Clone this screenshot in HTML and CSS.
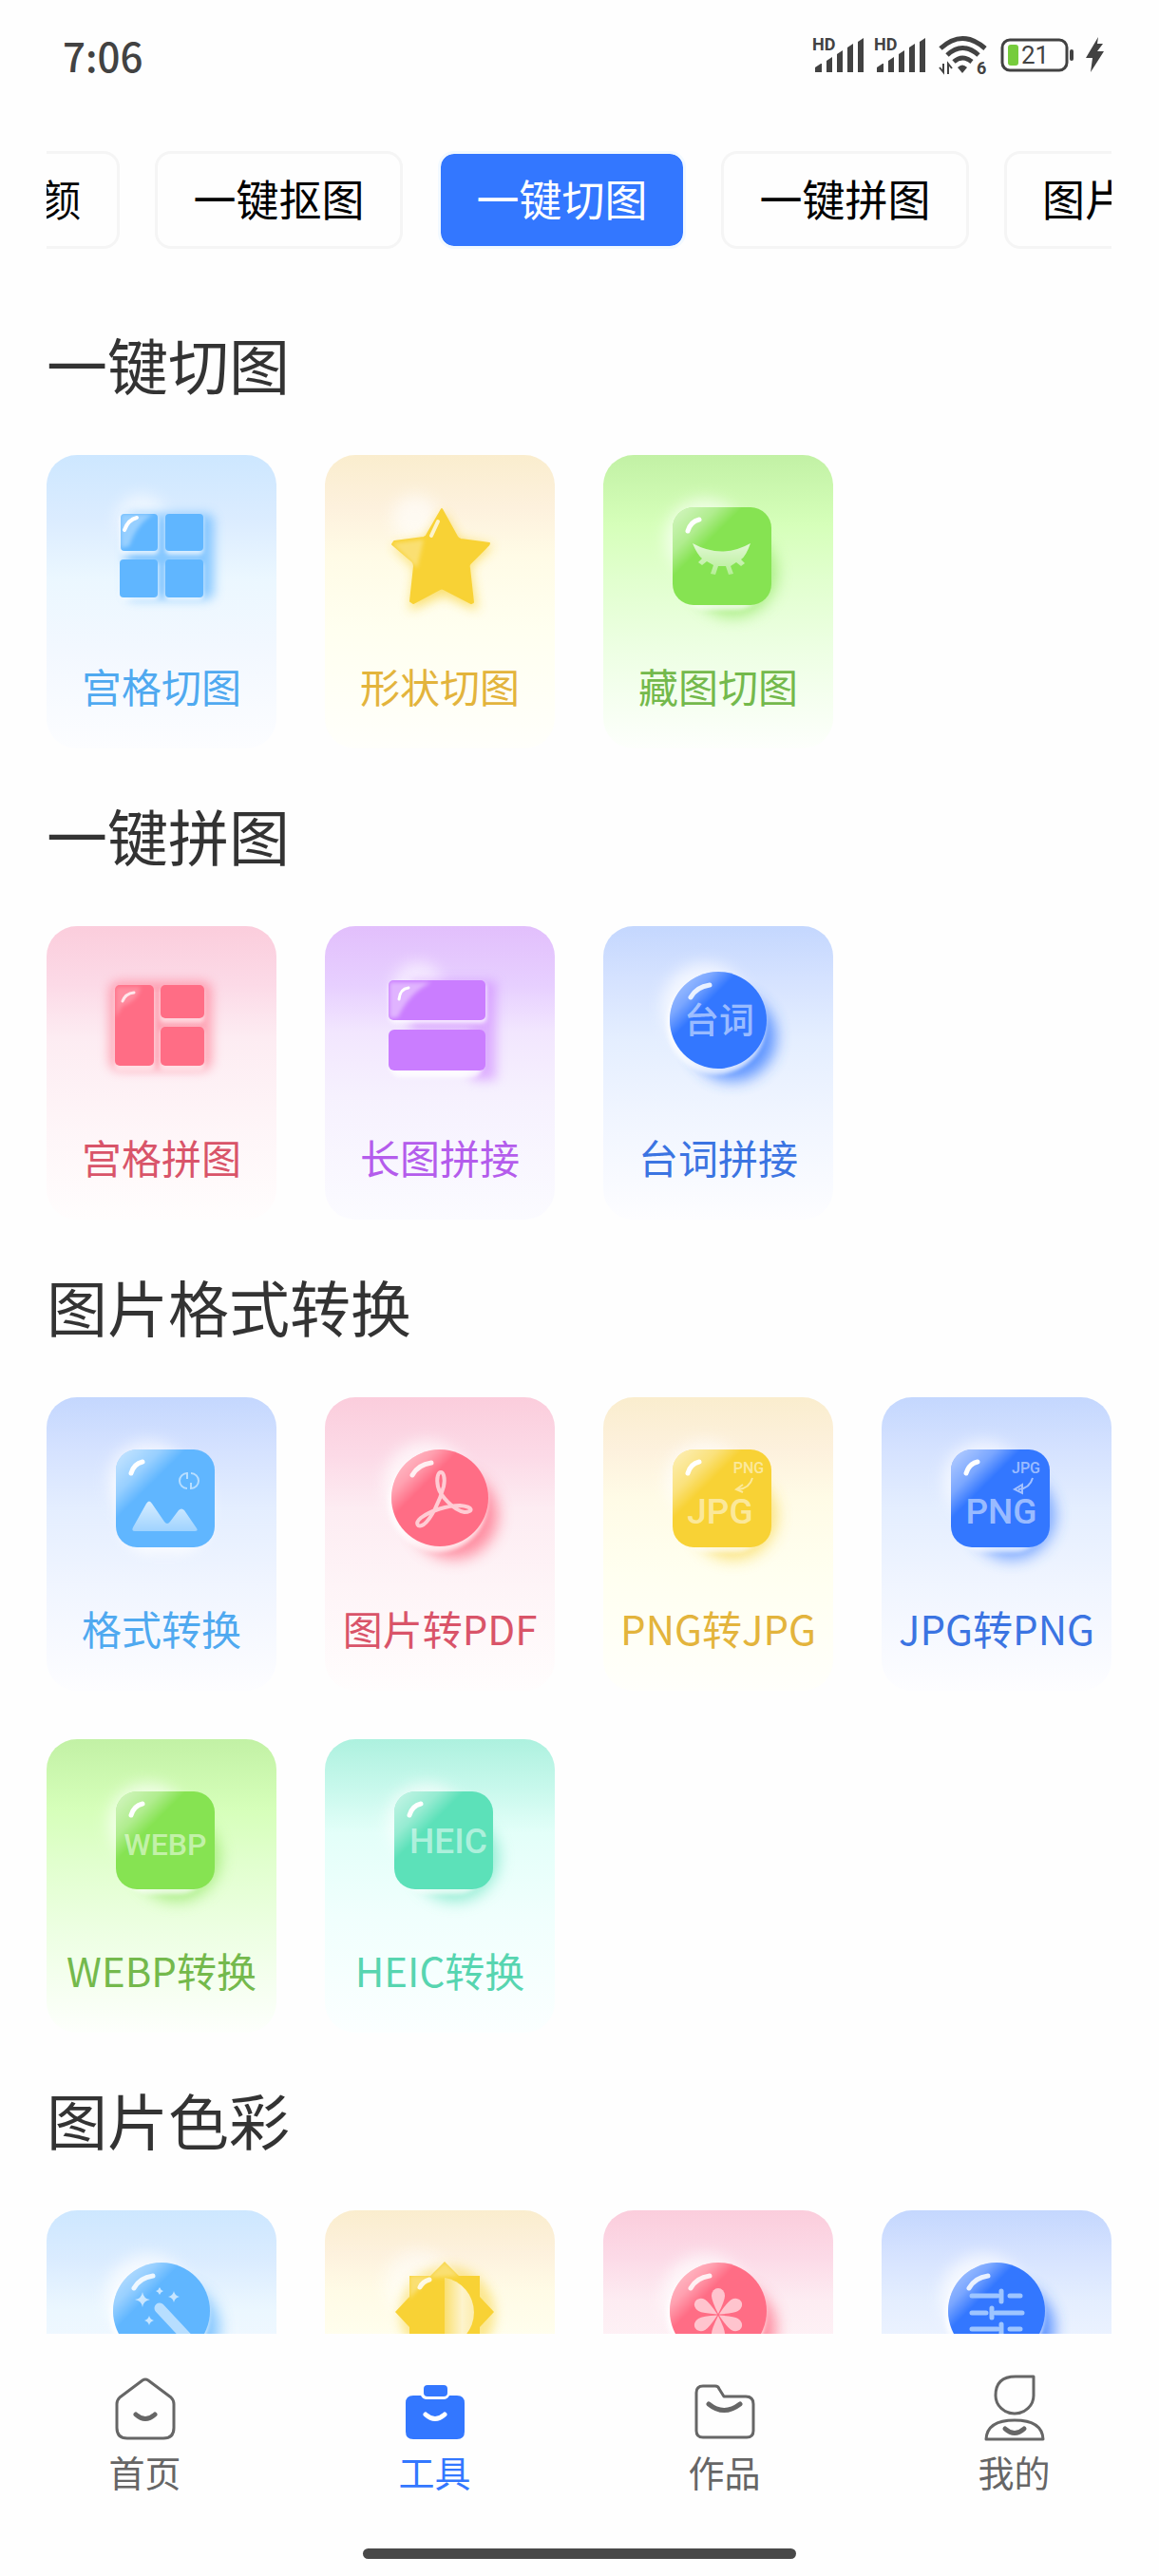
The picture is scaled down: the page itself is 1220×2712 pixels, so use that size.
FILE: index.html
```html
<!DOCTYPE html>
<html lang="zh-CN">
<head>
<meta charset="utf-8">
<meta name="viewport" content="width=device-width, initial-scale=1">
<title>工具</title>
<link rel="stylesheet" href="styles.css">
</head>
<body>
<!-- Shared shapes: glossy ball and tile that take the colour of their card -->
<svg class="defs" width="0" height="0" aria-hidden="true">
  <defs>
    <filter id="b2" x="-30%" y="-30%" width="160%" height="160%"><feGaussianBlur stdDeviation="2"/></filter>
    <filter id="b6" x="-40%" y="-40%" width="180%" height="180%"><feGaussianBlur stdDeviation="6"/></filter>
    <filter id="b8" x="-50%" y="-50%" width="200%" height="200%"><feGaussianBlur stdDeviation="8"/></filter>
    <linearGradient id="shine" x1="0.05" y1="0.05" x2="0.95" y2="0.95">
      <stop offset="0" stop-color="#fff" stop-opacity="0.6"/>
      <stop offset="0.2" stop-color="#fff" stop-opacity="0.35"/>
      <stop offset="0.34" stop-color="#fff" stop-opacity="0"/>
    </linearGradient>
    <linearGradient id="fade" x1="0" y1="0" x2="0" y2="1">
      <stop offset="0" stop-color="#fff" stop-opacity="0.75"/>
      <stop offset="1" stop-color="#fff" stop-opacity="0.4"/>
    </linearGradient>
    <linearGradient id="half" x1="0" y1="0" x2="1" y2="0">
      <stop offset="0" stop-color="#fff" stop-opacity="0.3"/>
      <stop offset="0.6" stop-color="#fff" stop-opacity="0.75"/>
      <stop offset="1" stop-color="#fff" stop-opacity="0.6"/>
    </linearGradient>
    <path id="gloss" d="M89 80Q92 70 101 68" fill="none" stroke="#fff" stroke-width="5" stroke-linecap="round"/>
    <g id="ball">
      <circle cx="107" cy="91" r="45" fill="#fff" opacity="0.7" filter="url(#b8)"/>
      <circle cx="136" cy="124" r="46" fill="currentColor" opacity="0.75" filter="url(#b8)"/>
      <circle cx="119" cy="111" r="52" fill="#fff" opacity="0.75" filter="url(#b2)"/>
      <circle cx="121" cy="106" r="51" fill="currentColor"/>
      <circle cx="121" cy="106" r="51" fill="url(#shine)"/>
      <path d="M92 82Q98 71 112 69" fill="none" stroke="#fff" stroke-opacity="0.85" stroke-width="5" stroke-linecap="round"/>
    </g>
    <g id="tile">
      <circle cx="107" cy="88" r="42" fill="#fff" opacity="0.65" filter="url(#b8)"/>
      <circle cx="137" cy="125" r="46" fill="currentColor" opacity="0.6" filter="url(#b8)"/>
      <rect x="75" y="62" width="98" height="101" rx="34" fill="#fff" opacity="0.7" filter="url(#b2)"/>
      <rect x="73" y="55" width="104" height="103" rx="22" fill="currentColor"/>
      <rect x="73" y="55" width="104" height="103" rx="22" fill="url(#shine)"/>
      <use href="#gloss"/>
    </g>
  </defs>
</svg>

<div class="app">
  <header class="status">
    <time class="clock">7:06</time>
    <div class="indicators">
      <svg width="54" height="40" viewBox="0 0 54 40" aria-label="信号">
        <text class="hd" x="0" y="15">HD</text>
        <path d="M3 38v-5l6-4h1v9zM15 38V26l6-4v16zM26 38V19l6-4v23zM37 38V12l6-4v30zM48 38V6l6-4v36z"/>
      </svg>
      <svg width="54" height="40" viewBox="0 0 54 40" aria-label="信号">
        <text class="hd" x="0" y="15">HD</text>
        <path d="M3 38v-5l6-4h1v9zM15 38V26l6-4v16zM26 38V19l6-4v23zM37 38V12l6-4v30zM48 38V6l6-4v36z"/>
      </svg>
      <svg class="wifi" width="53" height="40" viewBox="0 0 53 40" aria-label="无线网络">
        <path d="M2 13Q25-8 49 13M9 20Q25 5 42 20M16 27Q25 19 35 27" fill="none" stroke="#424242" stroke-width="5"/>
        <path d="M20 33q5-5 10 0l-5 6z"/>
        <path d="M1 33l4 5V29M10 40V29l4 5" fill="none" stroke="#424242" stroke-width="2"/>
        <text class="gen" x="40" y="40">6</text>
      </svg>
      <svg class="battery" width="77" height="40" viewBox="0 0 77 40" aria-label="电量">
        <rect x="1" y="4" width="68" height="32" rx="8" fill="none" stroke="#424242" stroke-width="3"/>
        <rect x="7" y="9" width="11" height="22" rx="3" fill="#76cc3c"/>
        <rect x="72" y="14" width="4" height="12" rx="2"/>
        <text class="level" x="21" y="29">21</text>
      </svg>
      <svg width="21" height="40" viewBox="0 0 21 40" aria-label="充电中">
        <path d="M14 1L1 23h7L6 38 20 16h-7l6-8h-6z"/>
      </svg>
    </div>
  </header>

  <nav class="tabs" id="tabs" aria-label="分类">
    <button class="tab">一键美颜</button>
    <button class="tab">一键抠图</button>
    <button class="tab active" aria-current="true">一键切图</button>
    <button class="tab">一键拼图</button>
    <button class="tab">图片格式转换</button>
  </nav>

  <main class="content">
    <section>
      <h2>一键切图</h2>
      <div class="grid">
        <button class="tool sky">
          <svg viewBox="0 0 242 213" aria-hidden="true">
            <circle cx="100" cy="68" r="26" fill="#fff" opacity="0.6" filter="url(#b8)"/>
            <rect x="84" y="62" width="92" height="90" rx="8" fill="currentColor" opacity="0.7" filter="url(#b6)"/>
            <g fill="#fff" opacity="0.7" filter="url(#b2)"><rect x="77" y="64" width="41" height="41" rx="5"/><rect x="125" y="64" width="40" height="41" rx="5"/><rect x="77" y="112" width="41" height="41" rx="5"/><rect x="125" y="112" width="40" height="41" rx="5"/></g>
            <g fill="currentColor"><rect x="78" y="62" width="39" height="39" rx="4"/><rect x="125" y="62" width="40" height="39" rx="4"/><rect x="77" y="110" width="40" height="40" rx="4"/><rect x="125" y="110" width="40" height="40" rx="4"/></g>
            <path d="M78 62h35q-18 10-26 34l-9 2z" fill="#fff" opacity="0.35" filter="url(#b2)"/>
            <path d="M82 79Q86 68 95 66" fill="none" stroke="#fff" stroke-width="4" stroke-linecap="round"/>
          </svg>
          <span>宫格切图</span>
        </button>
        <button class="tool gold">
          <svg viewBox="0 0 242 213" aria-hidden="true">
            <circle cx="95" cy="66" r="24" fill="#fff" opacity="0.6" filter="url(#b8)"/>
            <path d="M125 60l16 28 36 8-24 22 8 46-36-16-36 16 6-44-24-24 34-8z" fill="currentColor" opacity="0.65" filter="url(#b6)"/>
            <path d="M123 57l16 29q1 2 4 3l30 4q0 2-3 4l-17 17q-2 2-1 5l4 36-2 1-29-15q-2-1-4 0l-28 15-3-2 4-37q0-3-2-5l-21-18 2-3 31-4q3-1 4-4z" fill="currentColor" stroke="currentColor" stroke-width="2" stroke-linejoin="round"/>
            <path d="M71 93l33-4-7 30q-2-2-4-4z" fill="#fff" opacity="0.3" filter="url(#b2)"/>
            <path d="M112 85l7-15" fill="none" stroke="#fff" stroke-opacity="0.75" stroke-width="4" stroke-linecap="round"/>
          </svg>
          <span>形状切图</span>
        </button>
        <button class="tool green">
          <svg viewBox="0 0 242 213" aria-hidden="true">
            <use href="#tile"/>
            <path d="M94 93q31 17 61 0-5 14-10 17l4 4-4 3-5-4-6 4 3 8-5 1-3-9h-8l-3 9-5-1 3-9-7-4-5 4-4-3 4-4q-5-4-10-16z" fill="url(#fade)"/>
          </svg>
          <span>藏图切图</span>
        </button>
      </div>
    </section>

    <section>
      <h2>一键拼图</h2>
      <div class="grid">
        <button class="tool rose">
          <svg viewBox="0 0 242 213" aria-hidden="true">
            <rect x="66" y="58" width="108" height="94" rx="10" fill="currentColor" opacity="0.55" filter="url(#b6)"/>
            <g fill="#fff" opacity="0.55" filter="url(#b2)"><rect x="72" y="65" width="42" height="87" rx="5"/><rect x="119" y="65" width="47" height="37" rx="5"/><rect x="119" y="108" width="47" height="44" rx="5"/></g>
            <g fill="currentColor"><rect x="72" y="62" width="41" height="85" rx="5"/><rect x="120" y="62" width="46" height="35" rx="5"/><rect x="120" y="106" width="46" height="41" rx="5"/></g>
            <path d="M73 64h26q-2 14-19 20l-7 12z" fill="#fff" opacity="0.22" filter="url(#b2)"/>
            <path d="M80 79Q83 71 92 70" fill="none" stroke="#fff" stroke-opacity="0.8" stroke-width="3" stroke-linecap="round"/>
          </svg>
          <span>宫格拼图</span>
        </button>
        <button class="tool violet">
          <svg viewBox="0 0 242 213" aria-hidden="true">
            <circle cx="98" cy="64" r="26" fill="#fff" opacity="0.6" filter="url(#b8)"/>
            <path d="M90 58h90v104h-26V110H90z" fill="currentColor" opacity="0.55" filter="url(#b6)"/>
            <g fill="#fff" opacity="0.8" filter="url(#b2)"><rect x="68" y="60" width="102" height="42" rx="5"/><rect x="68" y="113" width="98" height="46" rx="12"/></g>
            <g fill="currentColor"><rect x="67" y="57" width="102" height="42" rx="5"/><rect x="67" y="109" width="102" height="43" rx="6"/></g>
            <path d="M68 59h44q-24 12-35 37l-9 1z" fill="#fff" opacity="0.42" filter="url(#b2)"/>
            <path d="M78 77Q79 66 88 65" fill="none" stroke="#fff" stroke-width="3" stroke-linecap="round"/>
          </svg>
          <span>长图拼接</span>
        </button>
        <button class="tool royal">
          <svg viewBox="0 0 242 213" aria-hidden="true">
            <use href="#ball" y="-7"/>
            <text class="mark" x="122" y="113" font-size="37">台词</text>
          </svg>
          <span>台词拼接</span>
        </button>
      </div>
    </section>

    <section>
      <h2>图片格式转换</h2>
      <div class="grid">
        <button class="tool royal pale">
          <svg viewBox="0 0 242 213" aria-hidden="true">
            <circle cx="107" cy="88" r="42" fill="#fff" opacity="0.65" filter="url(#b8)"/>
            <rect x="75" y="62" width="98" height="103" rx="34" fill="#fff" opacity="0.7" filter="url(#b6)"/>
            <rect x="73" y="55" width="104" height="103" rx="22" fill="currentColor"/>
            <rect x="73" y="55" width="104" height="103" rx="22" fill="url(#shine)"/>
            <use href="#gloss"/>
            <path d="M91 137l14-25q3-5 6 0l13 19q3 4 6 0l9-12q3-3 6 0l13 19q2 3-2 3H93q-4 0-2-4z" fill="url(#fade)"/>
            <g fill="none" stroke="#fff" stroke-opacity="0.55" stroke-width="2"><path d="M148 80a8 8 0 0 0 0 16M152 96a8 8 0 0 0 0-16M148 79v7M152 97v-7"/></g>
          </svg>
          <span>格式转换</span>
        </button>
        <button class="tool rose">
          <svg viewBox="0 0 242 213" aria-hidden="true">
            <use href="#ball"/>
            <path d="M119 94C115 74 129 74 125 94C121 109 112 128 104 134C98 138 94 133 101 127C112 119 129 114 142 114C157 115 156 121 147 121C135 119 121 103 119 94Z" fill="none" stroke="#fff" stroke-opacity="0.65" stroke-width="4" stroke-linejoin="round"/>
          </svg>
          <span>图片转PDF</span>
        </button>
        <button class="tool gold">
          <svg viewBox="0 0 242 213" aria-hidden="true">
            <use href="#tile"/>
            <text class="mark latin" x="123" y="133" font-size="37">JPG</text>
            <text class="mark latin" x="153" y="80" font-size="16">PNG</text>
            <path d="M157 85q-3 11-15 12M147 92l-7 5 7 3" fill="none" stroke="#fff" stroke-opacity="0.5" stroke-width="2"/>
          </svg>
          <span>PNG转JPG</span>
        </button>
        <button class="tool royal">
          <svg viewBox="0 0 242 213" aria-hidden="true">
            <use href="#tile"/>
            <text class="mark latin" x="126" y="133" font-size="37">PNG</text>
            <text class="mark latin" x="152" y="80" font-size="16">JPG</text>
            <path d="M159 85q-3 11-15 12M148 92l-8 5 8 4z" fill="none" stroke="#fff" stroke-opacity="0.55" stroke-width="2"/>
          </svg>
          <span>JPG转PNG</span>
        </button>
        <button class="tool green">
          <svg viewBox="0 0 242 213" aria-hidden="true">
            <use href="#tile"/>
            <text class="mark latin" x="125" y="122" font-size="32">WEBP</text>
          </svg>
          <span>WEBP转换</span>
        </button>
        <button class="tool mint">
          <svg viewBox="0 0 242 213" aria-hidden="true">
            <use href="#tile"/>
            <text class="mark latin" x="130" y="120" font-size="37">HEIC</text>
          </svg>
          <span>HEIC转换</span>
        </button>
      </div>
    </section>

    <section>
      <h2>图片色彩</h2>
      <div class="grid">
        <button class="tool sky" aria-label="智能调色">
          <svg viewBox="0 0 242 213" aria-hidden="true">
            <use href="#ball"/>
            <path d="M101 86q1 7 8 8-7 1-8 8-1-7-8-8 7-1 8-8zM119 81q1 3 4 4-3 1-4 4-1-3-4-4 3-1 4-4zM134 85q1 5 6 6-5 1-6 6-1-5-6-6 5-1 6-6zM108 111q1 4 5 5-4 1-5 5-1-4-5-5 4-1 5-5z" fill="#fff" fill-opacity="0.65"/>
            <path d="M119 103l28 30" stroke="#fff" stroke-opacity="0.55" stroke-width="11" stroke-linecap="round"/>
          </svg>
        </button>
        <button class="tool gold" aria-label="亮度调节">
          <svg viewBox="0 0 242 213" aria-hidden="true">
            <circle cx="98" cy="78" r="36" fill="#fff" opacity="0.5" filter="url(#b8)"/>
            <circle cx="129" cy="109" r="50" fill="currentColor" opacity="0.5" filter="url(#b6)"/>
            <path d="M126 54l15 15h22v22l15 16-15 16v22h-22l-15 15-15-15H89v-22l-15-16 15-16V69h22z" fill="currentColor"/>
            <path d="M126 54l15 15-32 2-20 22V69h22z" fill="#fff" opacity="0.3" filter="url(#b2)"/>
            <path d="M126 71a37 37 0 0 1 0 73z" fill="url(#half)"/>
            <path d="M100 81Q103 75 110 73" fill="none" stroke="#fff" stroke-opacity="0.85" stroke-width="5" stroke-linecap="round"/>
          </svg>
        </button>
        <button class="tool rose" aria-label="图片滤镜">
          <svg viewBox="0 0 242 213" aria-hidden="true">
            <use href="#ball"/>
            <g fill="#fff" fill-opacity="0.6">
              <path id="petal" d="M121 109q-7-14-7-19a7 8 0 0 1 14 0q0 5-7 19z"/>
              <use href="#petal" transform="rotate(60 121 110)"/>
              <use href="#petal" transform="rotate(120 121 110)"/>
              <use href="#petal" transform="rotate(180 121 110)"/>
              <use href="#petal" transform="rotate(240 121 110)"/>
              <use href="#petal" transform="rotate(300 121 110)"/>
            </g>
          </svg>
        </button>
        <button class="tool royal" aria-label="参数调节">
          <svg viewBox="0 0 242 213" aria-hidden="true">
            <use href="#ball"/>
            <path d="M95 90h27M135 90h11M126 85v11M95 108h15M120 108h28M116 103v10M95 125h27M135 125h11M126 120v10" fill="none" stroke="#9ec5ff" stroke-width="5" stroke-linecap="round"/>
          </svg>
        </button>
      </div>
    </section>
  </main>

  <nav class="bottom" aria-label="主导航">
    <a href="#home">
      <svg width="64" height="76" viewBox="0 0 64 76" aria-hidden="true"><path d="M29 8q3-2 6 0l24 18q3 3 3 7v25q0 11-11 11H13Q2 69 2 58V33q0-4 3-7z"/><path class="smile" d="M22 44q10 9 20 0"/></svg>
      <span>首页</span>
    </a>
    <a href="#tools" class="current" aria-current="page">
      <svg width="64" height="76" viewBox="0 0 64 76" aria-hidden="true"><path class="solid" d="M9 24h8q2 4 6 4h18q4 0 6-4h8q8 0 8 8v30q0 8-8 8H9q-8 0-8-8V32q0-8 8-8z"/><rect class="solid" x="20" y="13" width="25" height="12" rx="4"/><path class="smile" d="M22 44q10 9 20 0"/></svg>
      <span>工具</span>
    </a>
    <a href="#works">
      <svg width="64" height="76" viewBox="0 0 64 76" aria-hidden="true"><path d="M9 14h13q3 0 4 3l5 8h23q8 0 8 8v28q0 7-7 7H9q-7 0-7-7V21q0-7 7-7z"/><path class="smile" d="M15 33q16 13 33 0"/></svg>
      <span>作品</span>
    </a>
    <a href="#mine">
      <svg width="64" height="76" viewBox="0 0 64 76" aria-hidden="true"><path d="M52 4v20a20 19 0 0 1-40 0Q12 4 33 4zM2 70q1-20 30-20t30 20z"/><path class="smile" d="M22 59q10 9 20 0"/></svg>
      <span>我的</span>
    </a>
  </nav>
  <div class="home-bar"></div>
</div>
<script src="tabs.js"></script>
</body>
</html>
```
FILE: styles.css
```css
* { box-sizing: border-box; }

body {
  margin: 0;
  background: #fefefe;
  color: #333;
  font-family: "Noto Sans CJK SC", "Noto Sans", sans-serif;
}

button {
  border: 0;
  margin: 0;
  font: inherit;
  cursor: pointer;
}

.defs { position: absolute; }

.app {
  display: flex;
  flex-direction: column;
  height: 100vh;
  overflow: hidden;
}

/* Status bar */
.status {
  display: flex;
  flex: none;
  align-items: flex-start;
  justify-content: space-between;
  padding: 28px 57px 31px 66px;
  color: #424242;
}

.clock {
  font-size: 42px;
  font-weight: 500;
  line-height: 60px;
}

.indicators {
  display: flex;
  gap: 11px;
  padding-top: 10px;
  fill: #424242;
}

.indicators svg { overflow: visible; }
.wifi { margin-left: 3px; }
.battery { margin-left: 2px; }
.hd,
.gen { font: 700 18px Roboto, sans-serif; }
.level { font: 400 26px Roboto, sans-serif; }

/* Category tabs */
.tabs {
  display: flex;
  flex: none;
  gap: 37px;
  margin: 40px 50px 30px 49px;
  overflow-x: auto;
  scrollbar-width: none;
}

.tab {
  flex: none;
  min-width: 261px;
  height: 103px;
  padding: 0 37px 4px;
  border: 3px solid #f5f5f5;
  border-radius: 17px;
  background: #fefefe;
  color: #000;
  font-size: 45px;
  line-height: 60px;
  white-space: nowrap;
}

.tab.active {
  border-color: #f2f9ff;
  background: #3377ff padding-box;
  color: #fff;
}

/* Tool sections */
.content {
  flex: 1;
  min-height: 0;
  padding: 0 50px 0 49px;
  overflow-y: auto;
  scrollbar-width: none;
}

h2 {
  margin: 0;
  padding: 43px 0 49px;
  font-size: 64px;
  font-weight: 400;
  line-height: 95px;
}

.grid {
  display: grid;
  grid-template-columns: repeat(4, 1fr);
  gap: 51px;
}

.tool {
  display: flex;
  flex-direction: column;
  align-items: center;
  padding: 0 0 36px;
  border-radius: 32px;
  font-size: 42px;
  line-height: 60px;
  white-space: nowrap;
}

.tool svg {
  display: block;
  width: 100%;
}

.sky { background: linear-gradient(#cde7ff, #dbecff 22%, #ebf7ff 42%, #f3f8ff 68%, #fcfdff); color: #4fa9f0; }
.sky svg { color: #60b6ff; }
.gold { background: linear-gradient(#faedce, #fdf1dd 18%, #fffbe6 34%, #fffff0 60%, #fffffb); color: #e3b43c; }
.gold svg { color: #f8d235; }
.green { background: linear-gradient(#c2f1a5, #d6ffba 24%, #e1ffce 42%, #edffe3 66%, #fdfffc); color: #74b94c; }
.green svg { color: #86e352; }
.rose { background: linear-gradient(#fbcddc, #fcdae7 20%, #fdecf2 38%, #fef4f7 64%, #fffdfd); color: #d95469; }
.rose svg { color: #ff6d85; }
.violet { background: linear-gradient(#e2bffc, #e7cfff 20%, #f2e6fe 36%, #f6f1fe 58%, #fbfbff); color: #b45cec; }
.violet svg { color: #ca7dff; }
.royal { background: linear-gradient(#c4d7fe, #d5e2ff 18%, #e4eeff 38%, #f0f5ff 64%, #fdfdff); color: #3b74e2; }
.royal svg { color: #3377ff; }
.pale { color: #4fa9f0; }
.pale svg { color: #60b6ff; }
.mint { background: linear-gradient(#adf1df, #caf9ed 18%, #e3fff9 32%, #f0fffd 60%, #fbffff); color: #57d5b0; }
.mint svg { color: #5ce1b9; }

.mark {
  fill: #fff;
  fill-opacity: 0.52;
  font-family: "Noto Sans CJK SC", sans-serif;
  font-weight: 500;
  text-anchor: middle;
}

.latin { font-family: Roboto, sans-serif; }

/* Bottom navigation */
.bottom {
  display: grid;
  flex: none;
  grid-template-columns: repeat(4, 1fr);
  padding: 41px 0 53px;
}

.bottom a {
  display: flex;
  flex-direction: column;
  align-items: center;
  color: #666;
  font-size: 38px;
  line-height: 56px;
  text-decoration: none;
}

.bottom svg {
  fill: none;
  stroke: currentColor;
  stroke-width: 3;
  stroke-linejoin: round;
}

.bottom .smile {
  stroke-width: 5;
  stroke-linecap: round;
}

.bottom .solid {
  fill: currentColor;
  stroke: none;
}

.bottom .current { color: #3377ff; }
.current .smile { stroke: #fff; }

.home-bar {
  flex: none;
  width: 456px;
  height: 11px;
  margin: 0 auto 18px;
  border-radius: 6px;
  background: #484848;
}
```
FILE: tabs.js
```js
// Bring the active tab into view, leaving the earlier ones scrolled off to the left.
const tabs = document.getElementById('tabs');
const active = tabs.querySelector('.active');
tabs.scrollLeft = active.offsetLeft - tabs.offsetLeft - 412;
```
